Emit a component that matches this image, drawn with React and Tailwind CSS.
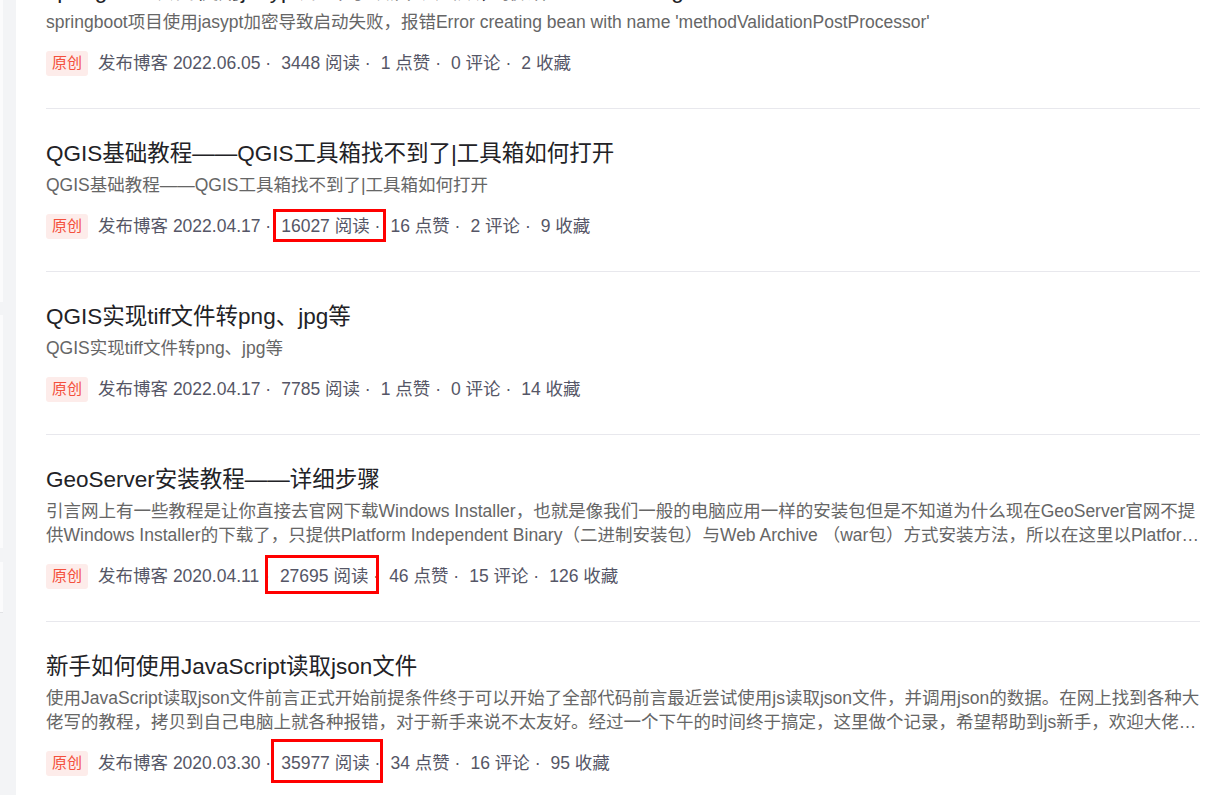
import React from "react";

const posts = [
  {
    title: "springboot项目使用jasypt加密导致启动失败，报错Error creating bean with name 'methodValidationPostProcessor'",
    desc: "springboot项目使用jasypt加密导致启动失败，报错Error creating bean with name 'methodValidationPostProcessor'",
    date: "2022.06.05",
    views: "3448",
    likes: "1",
    comments: "0",
    stars: "2",
  },
  {
    title: "QGIS基础教程——QGIS工具箱找不到了|工具箱如何打开",
    desc: "QGIS基础教程——QGIS工具箱找不到了|工具箱如何打开",
    date: "2022.04.17",
    views: "16027",
    likes: "16",
    comments: "2",
    stars: "9",
    box: { left: 227, top: -2, width: 113, height: 33 },
  },
  {
    title: "QGIS实现tiff文件转png、jpg等",
    desc: "QGIS实现tiff文件转png、jpg等",
    date: "2022.04.17",
    views: "7785",
    likes: "1",
    comments: "0",
    stars: "14",
  },
  {
    title: "GeoServer安装教程——详细步骤",
    desc: "引言网上有一些教程是让你直接去官网下载Windows Installer，也就是像我们一般的电脑应用一样的安装包但是不知道为什么现在GeoServer官网不提供Windows Installer的下载了，只提供Platform Independent Binary（二进制安装包）与Web Archive （war包）方式安装方法，所以在这里以Platform Independent Binary为例进行安装",
    date: "2020.04.11",
    views: "27695",
    likes: "46",
    comments: "15",
    stars: "126",
    box: { left: 219, top: -6, width: 114, height: 39 },
  },
  {
    title: "新手如何使用JavaScript读取json文件",
    desc: "使用JavaScript读取json文件前言正式开始前提条件终于可以开始了全部代码前言最近尝试使用js读取json文件，并调用json的数据。在网上找到各种大佬写的教程，拷贝到自己电脑上就各种报错，对于新手来说不太友好。经过一个下午的时间终于搞定，这里做个记录，希望帮助到js新手，欢迎大佬指正",
    date: "2020.03.30",
    views: "35977",
    likes: "34",
    comments: "16",
    stars: "95",
    box: { left: 225, top: -9, width: 112, height: 44 },
  },
];

const PostItem = ({ post }) => {
  return (
    <div className="border-t border-[#e8e8ed] pt-[29px] pb-[30px]">
      <h4 className="text-[22.5px] leading-[32px] text-[#222226] font-normal whitespace-nowrap overflow-hidden text-ellipsis">
        {post.title}
      </h4>
      <p className="mt-[3px] text-[17.5px] leading-[24px] text-[#666666] line-clamp-2">
        {post.desc}
      </p>
      <div className="relative mt-[14px] flex items-center h-[30px] text-[17.5px] text-[#555666] whitespace-nowrap">
        <span className="mr-[10px] px-[6px] h-[25px] flex items-center rounded-[3px] bg-[#fdecea] text-[#f4503c] text-[15px]">
          原创
        </span>
        <span className="mr-[10px]">发布博客 {post.date} ·</span>
        <span className="mr-[10px]">{post.views} 阅读 ·</span>
        <span className="mr-[10px]">{post.likes} 点赞 ·</span>
        <span className="mr-[10px]">{post.comments} 评论 ·</span>
        <span>{post.stars} 收藏</span>
        {post.box && (
          <div
            className="absolute border-[3px] border-[#ff0000]"
            style={{ left: post.box.left, top: post.box.top, width: post.box.width, height: post.box.height }}
          />
        )}
      </div>
    </div>
  );
};

export default function App() {
  return (
    <div
      className="h-[795px] overflow-hidden flex bg-[#f3f4f6]"
      style={{ fontFamily: '"Liberation Sans", "Noto Sans CJK SC", sans-serif' }}
    >
      {/* side column edge */}
      <div className="w-[3px] flex flex-col shrink-0">
        <div className="h-[302px] bg-[#fbfbfc]" />
        <div className="h-[13px]" />
        <div className="h-[233px] bg-[#fbfbfc]" />
        <div className="h-[14px]" />
        <div className="h-[51px] bg-[#fbfbfc] border-b border-[#e2e3e6]" />
      </div>
      <div className="w-[13px] shrink-0" />
      <div className="flex-1 bg-white pl-[30px] pr-[22px]">
        <div className="-mt-[55px]">
          {posts.map((post) => (
            <PostItem key={post.title + post.date} post={post} />
          ))}
        </div>
      </div>
    </div>
  );
}
